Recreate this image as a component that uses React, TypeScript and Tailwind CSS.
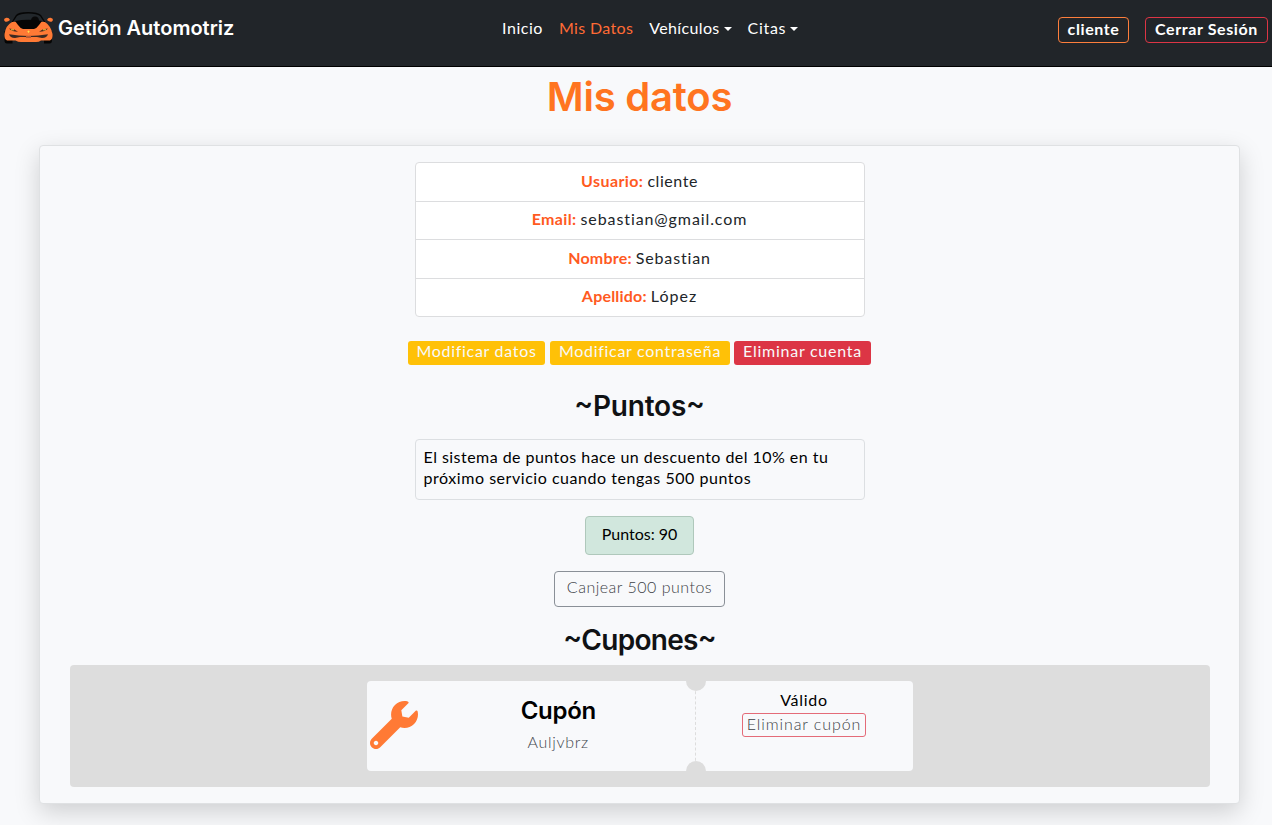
import { FaWrench } from "react-icons/fa";

const fields = [
  { label: "Usuario:", value: "cliente", row: "h-[39px] border-b", labelTrack: "tracking-[0.4px]", valueTrack: "tracking-[0.55px]" },
  { label: "Email:", value: "sebastian@gmail.com", row: "h-[38px] border-b", labelTrack: "tracking-[0.35px]", valueTrack: "tracking-[0.9px]" },
  { label: "Nombre:", value: "Sebastian", row: "h-[39px] border-b", labelTrack: "tracking-[0.2px]", valueTrack: "tracking-[0.85px]" },
  { label: "Apellido:", value: "López", row: "h-[37px]", labelTrack: "tracking-[0.2px]", valueTrack: "tracking-[1px]" },
];

function Car() {
  return (
    <svg viewBox="0 0 50 34" className="h-[34px] w-[50px] shrink-0">
      <path d="M1.500 20h8v12.500H4q-2.500 0-2.500-3zM41 20h8v9.500q0 3-2.500 3H41z" fill="#050505" />
      <path d="M8 12 13 4Q15 1 25 1t13 3l5 8-6 9H14z" fill="#050505" />
      <path d="M10 11 14 5Q17 2.500 25.500 2.500T37 5l4 6Q25 8 10 11z" fill="#22272b" />
      <path d="M28 10q0-4.500 4-4.500t4 4.500l-1 1h-7z" fill="#090909" />
      <path d="M1 9q0-2 2.500-2.300T7 9q-2.500 2.500-5 1.500zM50 9q0-2-2.500-2.300T44 9q2.500 2.500 5 1.500z" fill="#ff7a35" />
      <path d="M1.500 23Q3 14 9 11q16-2 33 0 6 4 7.500 12 .5 5-2.500 6.500h-9Q36 31 33 31H18q-3 0-5.500-1.500H4q-3-1.500-2.500-6.500z" fill="#ff7a35" />
      <path d="M12 10q13-2.500 27 0l-3 4q-2 3-5 4H20q-3-1-5-4z" fill="#050505" />
      <path d="m6 17.500 5 .8 4 2.500q-6 0-9-3.300zM45 17.500l-5 .8-4 2.500q6 0 9-3.300z" fill="#4a2c20" />
      <path d="M8 18.800h3M40 18.800h3" stroke="#ffd33f" strokeWidth="1" />
      <path d="M6 23.200q19.500 3.600 39 0-1 3.600-6 3.800l-5-1H17l-5 1q-5-.2-6-3.800z" fill="#3c2a22" />
      <path d="M23 24.800h5V27h-5z" fill="#b95c35" />
      <path d="m25.500 19.500 1.200.8-1.200 1.900-1.200-1.900z" fill="#ffe04a" />
    </svg>
  );
}

function Caret() {
  return <span className="ml-[4px] inline-block border-x-4 border-t-4 border-x-transparent border-t-current align-[3px]" />;
}

function SectionTitle({ children, className }: { children: string; className: string }) {
  return (
    <h2 className={`font-['Inter',sans-serif] text-[28px] leading-[34px] font-semibold text-[#101214] ${className}`}>
      <span className="relative -top-[3px]">~</span>{children}<span className="relative -top-[3px]">~</span>
    </h2>
  );
}

export default function App() {
  return (
    <div className="flex h-[825px] w-[1272px] flex-col overflow-hidden bg-[#f8f9fb] font-['Lato','Open_Sans',sans-serif] text-base text-[#212529]">
      <header className="flex h-[67px] shrink-0 items-start border-b border-black bg-[#212529] text-white">
        <div className="flex w-[502px] items-center pt-[11px] pl-[3px]">
          <Car />
          <span className="ml-[5px] font-['Inter',sans-serif] text-[20px] leading-[34px] font-semibold whitespace-nowrap">Getión Automotriz</span>
        </div>
        <nav className="flex w-[556px] gap-[16px] pt-[16px] leading-[24px] whitespace-nowrap">
          <span className="tracking-[0.55px]">Inicio</span>
          <span className="tracking-[0.35px] text-[#ff6b35]">Mis Datos</span>
          <span className="tracking-[0.35px]">Vehículos<Caret /></span>
          <span className="tracking-[0.7px]">Citas<Caret /></span>
        </nav>
        <div className="flex gap-[16px] pt-[17px] font-bold tracking-[0.6px]">
          <button className="flex h-[26px] w-[71px] items-center justify-center rounded-[4px] border border-[#fd7e3c] pb-[2px]">cliente</button>
          <button className="flex h-[26px] w-[123px] items-center justify-center rounded-[4px] border border-[#dc3545] pb-[2px]">Cerrar Sesión</button>
        </div>
      </header>
      <h1 className="h-[78px] shrink-0 pt-[6px] pl-[7px] text-center font-['Inter',sans-serif] text-[40px] leading-[48px] font-semibold tracking-[-0.2px] text-[#ff7420]">Mis datos</h1>
      <main className="ml-[39px] flex h-[659px] w-[1201px] shrink-0 flex-col items-center rounded-[4px] border border-[#dfe1e3] bg-[#f8f9fb] pt-[16px] shadow-[0_8px_24px_rgba(0,0,0,0.17)]">
        <div className="w-[450px] overflow-hidden rounded-[4px] border border-[#dcdddf] bg-white">
          {fields.map((f) => (
            <div key={f.label} className={`flex items-center justify-center gap-[4px] border-[#dcdddf] pb-[3px] ${f.row}`}>
              <strong className={`font-bold text-[#ff5a1f] ${f.labelTrack}`}>{f.label}</strong>
              <span className={f.valueTrack}>{f.value}</span>
            </div>
          ))}
        </div>
        <div className="mt-[24px] flex h-[24px] text-[#f8f9fa]">
          <button className="w-[137px] rounded-[3px] bg-[#ffc107] pb-[4px] leading-[20px] tracking-[0.7px]">Modificar datos</button>
          <button className="ml-[5px] w-[180px] rounded-[3px] bg-[#ffc107] pb-[4px] leading-[20px] tracking-[0.7px]">Modificar contraseña</button>
          <button className="ml-[4px] w-[137px] rounded-[3px] bg-[#dc3545] pb-[4px] leading-[20px] tracking-[0.75px]">Eliminar cuenta</button>
        </div>
        <SectionTitle className="mt-[24px] h-[50px] tracking-[-0.2px]">Puntos</SectionTitle>
        <p className="h-[61px] w-[450px] rounded-[4px] border border-[#dcdfe2] px-[8px] pt-[6px] leading-[21px] tracking-[0.46px] text-black">
          El sistema de puntos hace un descuento del 10% en tu<br />
          <span className="tracking-[0.54px]">próximo servicio cuando tengas 500 puntos</span>
        </p>
        <div className="mt-[16px] flex h-[39px] w-[109px] items-center justify-center rounded-[4px] border border-[#afc8bb] bg-[#d1e7dd] pb-[3px] text-black">Puntos: 90</div>
        <button className="mt-[16px] h-[36px] w-[171px] rounded-[4px] border border-[#8a9097] pb-[4px] font-light tracking-[0.5px] text-[#3c4146]">Canjear 500 puntos</button>
        <SectionTitle className="mt-[16px] h-[42px] tracking-[-0.7px]">Cupones</SectionTitle>
        <section className="flex h-[122px] w-[1140px] justify-center rounded-[4px] bg-[#ddd] pt-[16px]">
          <article className="relative flex h-[90px] w-[546px] overflow-hidden rounded-[4px] bg-[#f8f9fb]">
            <FaWrench className="mt-[19.5px] ml-[3.5px] size-[48px] shrink-0 text-[#ff7a35]" />
            <div className="flex w-[276.5px] flex-col items-center pt-[15px] pl-[4px]">
              <h3 className="font-['Inter',sans-serif] text-[24px] leading-[30px] font-semibold tracking-[-0.3px] text-black">Cupón</h3>
              <span className="mt-[4px] leading-[24px] font-light tracking-[0.7px] text-[#3f464d]">Auljvbrz</span>
            </div>
            <div className="flex w-[218px] flex-col items-center border-l border-dashed border-[#ddd] pt-[8px]">
              <span className="h-[24px] leading-[22px] tracking-[0.7px] text-black">Válido</span>
              <button className="h-[24px] w-[124px] rounded-[3px] border border-[#e46b78] pb-[3px] leading-[18px] font-light tracking-[0.9px] whitespace-nowrap text-[#3c4146]">Eliminar cupón</button>
            </div>
            <span className="absolute -top-[10px] left-[319px] size-[20px] rounded-full bg-[#ddd]" />
            <span className="absolute -bottom-[10px] left-[319px] size-[20px] rounded-full bg-[#ddd]" />
          </article>
        </section>
      </main>
    </div>
  );
}
